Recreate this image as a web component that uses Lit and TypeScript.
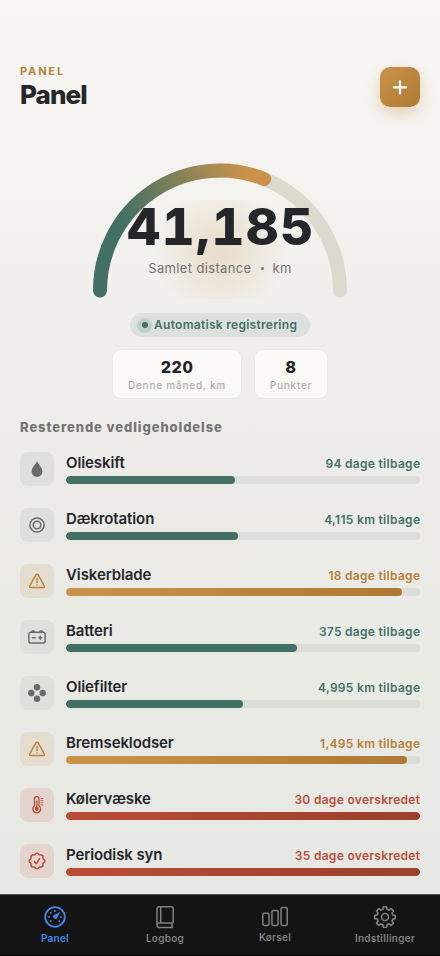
import { LitElement, html, css, svg } from "lit";
import { customElement, property } from "lit/decorators.js";
import { classMap } from "lit/directives/class-map.js";

type Tone = "ok" | "warn" | "late";
interface Task { name: string; left: string; fill: number; tone: Tone; icon: string; }

const tasks: Task[] = [
  { name: "Olieskift", left: "94 dage tilbage", fill: 47.8, tone: "ok", icon: "drop" },
  { name: "Dækrotation", left: "4,115 km tilbage", fill: 48.7, tone: "ok", icon: "tire" },
  { name: "Viskerblade", left: "18 dage tilbage", fill: 95, tone: "warn", icon: "warning" },
  { name: "Batteri", left: "375 dage tilbage", fill: 65.3, tone: "ok", icon: "battery" },
  { name: "Oliefilter", left: "4,995 km tilbage", fill: 50.1, tone: "ok", icon: "filter" },
  { name: "Bremseklodser", left: "1,495 km tilbage", fill: 96.3, tone: "warn", icon: "warning" },
  { name: "Kølervæske", left: "30 dage overskredet", fill: 100, tone: "late", icon: "thermo" },
  { name: "Periodisk syn", left: "35 dage overskredet", fill: 100, tone: "late", icon: "seal" },
];

/* Closed outline whose radius swings between two values, used for the seal. */
function wave(cx: number, cy: number, r: number, amp: number, lobes: number): string {
  const pts: string[] = [];
  for (let i = 0; i < 144; i++) {
    const a = (i / 144) * Math.PI * 2;
    const q = r + amp * Math.cos(a * lobes);
    pts.push(`${(cx + q * Math.sin(a)).toFixed(2)} ${(cy - q * Math.cos(a)).toFixed(2)}`);
  }
  return `M${pts.join("L")}Z`;
}

function gear(c: number, inner: number, outer: number): string {
  const pts: string[] = [];
  const step = Math.PI / 4;
  for (let i = 0; i < 8; i++) {
    for (const [off, r] of [[-0.25, inner], [-0.16, outer], [0.16, outer], [0.25, inner]]) {
      const a = i * step + off;
      pts.push(`${(c + r * Math.sin(a)).toFixed(2)} ${(c - r * Math.cos(a)).toFixed(2)}`);
    }
  }
  return `M${pts.join("L")}Z`;
}

/* Row icons share an 18-unit box. */
const icons: Record<string, unknown> = {
  drop: svg`<path fill="currentColor" d="M9 1.2C8.2 3.2 3.6 7.7 3.6 11.5a5.4 5.4 0 0 0 10.8 0C14.4 7.7 9.8 3.2 9 1.2Z"/>`,
  tire: svg`<g fill="none" stroke="currentColor" stroke-width="1.5"><circle cx="9" cy="9" r="7.1"/><circle cx="9" cy="9" r="3.8"/></g>`,
  warning: svg`<path fill="none" stroke="currentColor" stroke-width="1.5" stroke-linejoin="round" d="M7.9 2.9 1.9 13.5q-.9 2 1.2 2.1H14.9q2.1-.1 1.2-2.1L10.1 2.9Q9 1.6 7.9 2.9Z"/><path stroke="currentColor" stroke-width="1.5" stroke-linecap="round" d="M9 6.8V10.4M9 12.9V13"/>`,
  battery: svg`<rect x=".9" y="4.3" width="16.2" height="10.8" rx="1.8" fill="none" stroke="currentColor" stroke-width="1.5"/><path fill="currentColor" d="M3.2 4V3.3q0-1 1-1h1.6q1 0 1 1V4ZM11.2 4V3.3q0-1 1-1h1.6q1 0 1 1V4Z"/><path stroke="currentColor" stroke-width="1.4" stroke-linecap="round" d="M4.4 9.8H7.2M10.8 9.8H13.8M12.3 8.3V11.3"/>`,
  filter: svg`<g fill="currentColor"><circle cx="9" cy="3.3" r="3.2"/><circle cx="3.3" cy="9" r="3.2"/><circle cx="14.7" cy="9" r="3.2"/><circle cx="9" cy="14.7" r="3.2"/></g>`,
  thermo: svg`<path fill="none" stroke="currentColor" stroke-width="1.3" d="M6.5 9.7V2.9a2.2 2.2 0 0 1 4.4 0V9.7a3.9 3.9 0 1 1-4.4 0Z"/><circle cx="8.7" cy="12.8" r="2.1" fill="currentColor"/><path stroke="currentColor" stroke-width="1.3" stroke-linecap="round" d="M8.7 5.2V12"/><path stroke="currentColor" stroke-width=".9" d="M12.6 2.6H15.2M12.6 4.7H15.2M12.6 6.8H15.2M12.6 8.9H15.2"/>`,
  seal: svg`<path fill="none" stroke="currentColor" stroke-width="1.5" d=${wave(9, 9, 7.2, 0.6, 8)} /><path fill="none" stroke="currentColor" stroke-width="1.4" stroke-linecap="round" stroke-linejoin="round" d="M6.3 9.5 8.2 11.8 11.7 6.5"/>`,
};

/* Tab icons share a 26-unit box. */
const tabs = [
  { label: "Panel", active: true, icon: svg`<circle cx="13" cy="13" r="9.8" fill="none" stroke="currentColor" stroke-width="1.8"/><g fill="currentColor"><circle cx="13" cy="7" r=".9"/><circle cx="8.8" cy="8.8" r=".9"/><circle cx="7" cy="13" r=".9"/><circle cx="8.8" cy="17.2" r=".9"/><circle cx="19" cy="13" r=".9"/><circle cx="17.2" cy="17.2" r=".9"/><path d="M18.4 7.7 14.8 14.3a2.1 2.1 0 1 1-3.1-3Z"/></g>` },
  { label: "Logbog", icon: svg`<path fill="none" stroke="currentColor" stroke-width="1.5" stroke-linejoin="round" d="M21.2 19.1V4.6q0-1.9-1.9-1.9H7.2Q5 2.7 5 4.9V21q0 2.4 2.4 2.4H21M21.2 19.1H7.4Q5 19.1 5 21.2M8.7 2.7V19M20 19.1V23.4"/>` },
  { label: "Kørsel", icon: svg`<g fill="none" stroke="currentColor" stroke-width="1.5"><rect x=".8" y="9.3" width="6.2" height="12.2" rx="1.4"/><rect x="9.9" y="6.5" width="6.2" height="15" rx="1.4"/><rect x="19" y="3.6" width="6.2" height="17.9" rx="1.4"/></g>` },
  { label: "Indstillinger", icon: svg`<path fill="none" stroke="currentColor" stroke-width="1.6" stroke-linejoin="round" d=${gear(13, 8, 10.4)} /><circle cx="13" cy="13" r="3.5" fill="none" stroke="currentColor" stroke-width="1.6"/>` },
];

@customElement("task-row")
class TaskRow extends LitElement {
  @property({ attribute: false }) task!: Task;
  static styles = css`
    :host { display: flex; gap: 12px; height: 34px; }
    .badge { flex: none; width: 34px; height: 34px; border-radius: 8px; display: grid; place-items: center; background: #dfdfdc; color: #6b6b6c; }
    .badge.warn { background: #e4dccf; color: #b98237; }
    .badge.late { background: #e3d4cd; color: #bb4a35; }
    svg { display: block; width: 18px; height: 18px; }
    .body { flex: 1; }
    .line { display: flex; justify-content: space-between; height: 24px; }
    .name { font: 600 15px/22px Inter, sans-serif; letter-spacing: -0.1px; color: #25262a; }
    .left { font: 600 12px/24px Inter, sans-serif; letter-spacing: 0.3px; margin-right: -0.3px; color: #437266; }
    .left.warn { color: #b58038; }
    .left.late { color: #b84e3b; }
    .track { height: 8px; border-radius: 4px; background: #dcdcd8; overflow: hidden; }
    .fill { height: 100%; border-radius: 4px; background: #437065; }
    .fill.warn { background: linear-gradient(90deg, #cb934a, #ae7933); }
    .fill.late { background: linear-gradient(90deg, #b94d38, #9b3f2d); }
  `;
  render() {
    const t = this.task;
    const tone = { [t.tone]: true };
    return html`<div class=${classMap({ badge: true, ...tone })}><svg viewBox="0 0 18 18">${icons[t.icon]}</svg></div>
      <div class="body">
        <div class="line"><span class="name">${t.name}</span><span class=${classMap({ left: true, ...tone })}>${t.left}</span></div>
        <div class="track"><div class=${classMap({ fill: true, ...tone })} style="width:${t.fill}%"></div></div>
      </div>`;
  }
}

@customElement("app-root")
class AppRoot extends LitElement {
  static styles = css`
    :host { display: flex; flex-direction: column; height: 956px; width: 440px; overflow: hidden; box-sizing: border-box; font-family: Inter, sans-serif; background: linear-gradient(180deg, #f7f6f3 0, #f3f2ef 22%, #edece8 45%, #e7e8e3 94%); }
    header { display: flex; justify-content: space-between; padding: 64px 20px 0; height: 56px; }
    .eyebrow { font: 700 11px/14px Inter, sans-serif; letter-spacing: 1.85px; color: #b68139; }
    h1 { margin: 1px 0 0; font: 800 26px/32px Inter, sans-serif; letter-spacing: -0.9px; color: #25262a; }
    .add { margin: 3px 0 0; width: 40px; height: 40px; padding: 0; border: 0; border-radius: 10px; display: grid; place-items: center; background: linear-gradient(135deg, #cb934a, #ae7933); box-shadow: 0 6px 14px rgba(203, 147, 74, 0.36); }
    .gauge { position: relative; width: 256px; height: 138px; margin: 42px auto 0; }
    .arc { display: block; width: 256px; height: 138px; }
    .glow { position: absolute; left: 58px; top: 38px; width: 140px; height: 99px; background: radial-gradient(circle at 50% 50%, rgba(203, 147, 74, 0.22) 0, rgba(203, 147, 74, 0.12) 32px, rgba(203, 147, 74, 0.03) 56px, rgba(203, 147, 74, 0) 68px); }
    .reading { position: absolute; inset: 0; display: flex; flex-direction: column; align-items: center; white-space: nowrap; }
    .total { margin: 34px 0 0 2px; font: 800 51px/62px Inter, sans-serif; font-variant-numeric: tabular-nums; letter-spacing: 1.5px; color: #25262a; }
    .caption { font: 400 13px/20px Inter, sans-serif; letter-spacing: 0.36px; color: #747372; }
    .caption i { display: inline-block; width: 3px; height: 3px; margin: 0 9px; border-radius: 50%; background: currentColor; vertical-align: 3.5px; }
    .auto { margin: 13px auto 0; width: 180px; height: 24px; box-sizing: border-box; padding-left: 7px; border-radius: 12px; background: #dde1dc; display: flex; align-items: center; gap: 2px; font: 600 12px/24px Inter, sans-serif; letter-spacing: 0.29px; color: #437266; white-space: nowrap; }
    .dot { flex: none; width: 15px; height: 15px; border-radius: 50%; background: #c2cfc9; display: grid; place-items: center; }
    .dot::after { content: ""; width: 6px; height: 6px; border-radius: 50%; background: #437065; }
    .stats { display: flex; justify-content: center; gap: 12px; margin-top: 12px; }
    .stat { height: 50px; box-sizing: border-box; border: 1px solid #e9e8e4; border-radius: 9px; background: #faf9f6; text-align: center; white-space: nowrap; }
    .month { width: 130px; }
    .points { width: 74px; }
    .value { margin-top: 7px; font: 800 16px/20px Inter, sans-serif; font-variant-numeric: tabular-nums; letter-spacing: 0.5px; color: #222326; }
    .unit { margin-top: 1px; font: 500 10px/14px Inter, sans-serif; letter-spacing: 0.78px; color: #adadac; }
    h2 { margin: 19px 20px 0; font: 800 13px/18px Inter, sans-serif; letter-spacing: 0.92px; color: #747473; }
    .list { display: flex; flex-direction: column; gap: 22px; margin: 16px 20px 0; }
    nav { margin-top: auto; flex: none; height: 62px; box-sizing: border-box; border-top: 1px solid #555552; border-bottom: 1px solid #000; background: #141414; display: grid; grid-template-columns: repeat(4, 1fr); }
    .tab { display: flex; flex-direction: column; align-items: center; padding-top: 9px; color: #808080; }
    .tab.active { color: #4388ec; }
    .tab svg { display: block; width: 26px; height: 26px; }
    .tab span { margin-top: 1px; font: 600 10px/14px Inter, sans-serif; letter-spacing: 0.25px; }
    .tab:nth-child(3) span { margin-top: 0; }
  `;
  render() {
    const a = Math.PI * 0.62;
    const ex = 128 - 120 * Math.cos(a);
    const ey = 128.6 - 120 * Math.sin(a);
    return html`
      <header>
        <div><div class="eyebrow">PANEL</div><h1>Panel</h1></div>
        <button class="add" aria-label="Tilføj"><svg width="16" height="16" viewBox="0 0 16 16"><path d="M8 2.4V14.4M2 8.4H14" stroke="#fff" stroke-width="2.3" stroke-linecap="round"/></svg></button>
      </header>
      <div class="gauge">
        <div class="glow"></div>
        <svg class="arc" viewBox="0 0 256 138">
          <defs><linearGradient id="sweep" gradientUnits="userSpaceOnUse" x1="38" y1="80" x2="166" y2="44"><stop offset="0" stop-color="#437065"/><stop offset="1" stop-color="#cb934a"/></linearGradient></defs>
          <g fill="none" stroke-width="14" stroke-linecap="round">
            <path stroke="#dcd9ce" d="M8 128.6A120 120 0 0 1 248 128.6"/>
            <path stroke="url(#sweep)" d="M8 128.6A120 120 0 0 1 ${ex} ${ey}"/>
          </g>
        </svg>
        <div class="reading"><div class="total">41,185</div><div class="caption">Samlet distance<i></i>km</div></div>
      </div>
      <div class="auto"><i class="dot"></i><span>Automatisk registrering</span></div>
      <div class="stats">
        <div class="stat month"><div class="value">220</div><div class="unit">Denne måned, km</div></div>
        <div class="stat points"><div class="value">8</div><div class="unit">Punkter</div></div>
      </div>
      <h2>Resterende vedligeholdelse</h2>
      <div class="list">${tasks.map((t) => html`<task-row .task=${t}></task-row>`)}</div>
      <nav>${tabs.map((t) => html`<div class=${classMap({ tab: true, active: !!t.active })}><svg viewBox="0 0 26 26">${t.icon}</svg><span>${t.label}</span></div>`)}</nav>
    `;
  }
}
